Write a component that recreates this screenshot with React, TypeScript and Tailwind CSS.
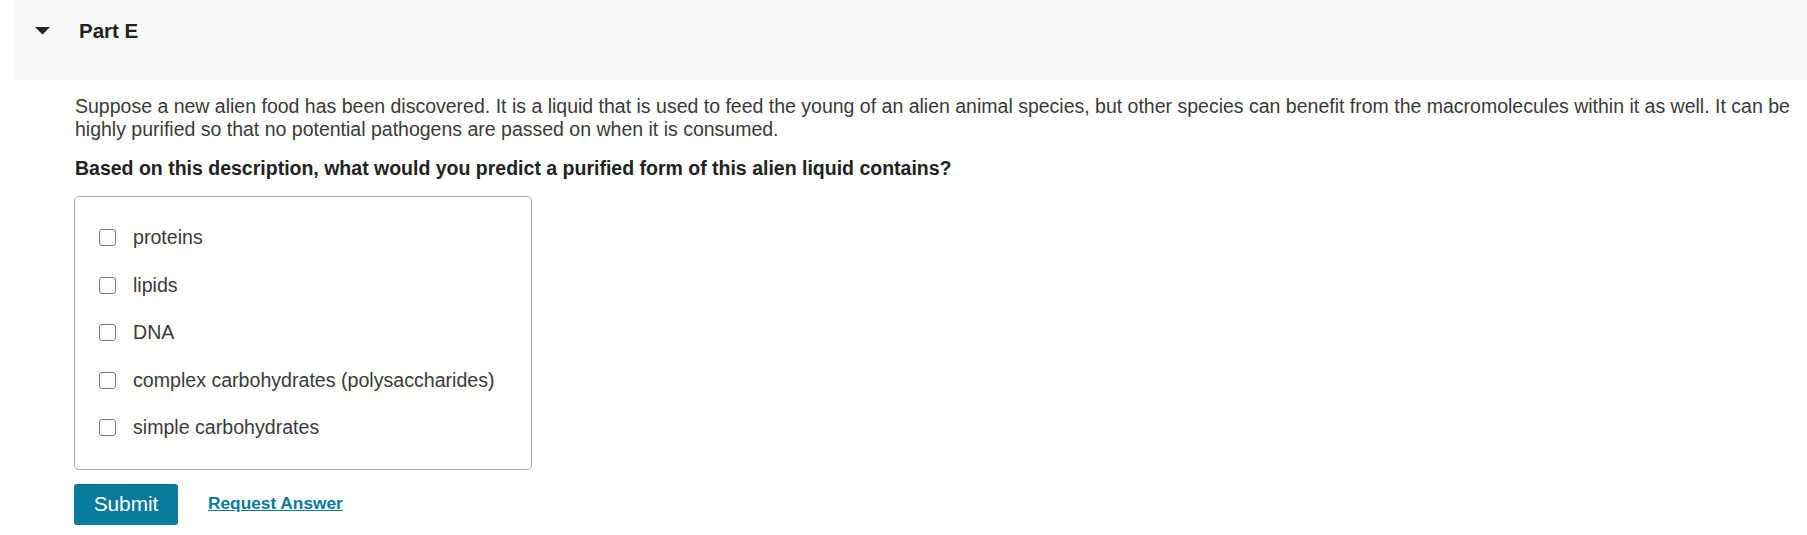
const OPTIONS = [
  "proteins",
  "lipids",
  "DNA",
  "complex carbohydrates (polysaccharides)",
  "simple carbohydrates",
];

export default function App() {
  return (
    <div className="min-h-[535px] bg-white font-['Liberation_Sans',Arial,sans-serif] text-[#333]">
      {/* Part header */}
      <div className="ml-[14px] h-[80px] bg-[#f8f8f8] pl-[21px] pt-[19px]">
        <div className="flex h-[23px] items-center">
          <svg width="15" height="8" viewBox="0 0 15 8" className="mr-[29px]">
            <polygon points="0,0 15,0 7.5,7.5" fill="#222" />
          </svg>
          <span className="text-[20.5px] font-bold leading-[23px] text-[#222]">Part E</span>
        </div>
      </div>

      {/* Question */}
      <div className="pl-[75px] pr-[12px] pt-[15px]">
        <p className="text-[19.5px] leading-[23px] text-[#3a3a3a]">
          Suppose a new alien food has been discovered. It is a liquid that is used to feed the young of an alien
          animal species, but other species can benefit from the macromolecules within it as well. It can be highly
          purified so that no potential pathogens are passed on when it is consumed.
        </p>
        <p className="mt-[16px] text-[19.5px] font-bold leading-[23px] text-[#222]">
          Based on this description, what would you predict a purified form of this alien liquid contains?
        </p>

        <div className="ml-[-1px] mt-[16px] w-[458px] rounded-[5px] border border-[#a9a9a9] py-[17px] pl-[24px]">
          {OPTIONS.map((opt) => (
            <label key={opt} className="flex h-[47.5px] items-center gap-[17px]">
              <span className="h-[17px] w-[17px] shrink-0 rounded-[3px] border-[1.5px] border-[#767676] bg-white" />
              <span className="text-[19.6px] text-[#3a3a3a]">{opt}</span>
            </label>
          ))}
        </div>

        <div className="ml-[-1px] mt-[14px] flex items-center gap-[30px]">
          <button className="h-[41px] w-[104px] rounded-[3px] bg-[#087a9b] text-[20.8px] text-white">Submit</button>
          <a href="#" className="text-[17.3px] font-bold text-[#087a9b] underline">
            Request Answer
          </a>
        </div>
      </div>
    </div>
  );
}
